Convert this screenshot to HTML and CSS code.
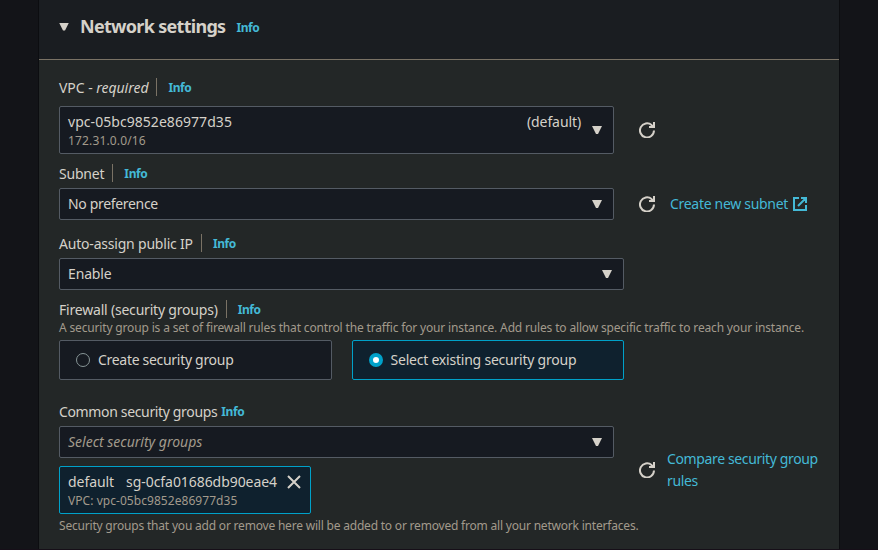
FILE: index.html
```html
<!DOCTYPE html>
<html lang="en">
<head>
<meta charset="utf-8">
<title>Network settings</title>
<link rel="stylesheet" href="styles.css">
</head>
<body>
<svg class="defs" width="0" height="0" aria-hidden="true">
  <symbol id="refresh" viewBox="0 0 16 16"><path d="M15 8.5A7 7 0 1 1 12.6 3.1L14 4.6" fill="none" stroke="currentColor" stroke-width="2"/><path d="M14 0h2v6h-6V4h2.5L14 3z" fill="currentColor"/></symbol>
  <symbol id="external" viewBox="0 0 14 14"><path d="M6 1H1v12h12V8M8 1h5v5M13 1 5 9" fill="none" stroke="currentColor" stroke-width="2"/></symbol>
  <symbol id="close" viewBox="0 0 14 14"><path d="m1 1 12 12M13 1 1 13" fill="none" stroke="currentColor" stroke-width="2"/></symbol>
</svg>
<main class="panel">
  <header class="panel-header">
    <span class="caret"></span>
    <h2>Network settings</h2>
    <a class="info">Info</a>
  </header>
  <div class="panel-body">
    <section class="field vpc">
      <div class="label"><span class="name">VPC - <i>required</i></span><span class="divider"></span><a class="info">Info</a></div>
      <div class="row">
        <div class="select tall">
          <div class="option"><span class="vpc-id">vpc-05bc9852e86977d35</span><small>172.31.0.0/16</small></div>
          <span class="tag">(default)</span>
          <span class="caret"></span>
        </div>
        <svg class="refresh"><use href="#refresh"/></svg>
      </div>
    </section>
    <section class="field subnet">
      <div class="label"><span class="name">Subnet</span><span class="divider"></span><a class="info">Info</a></div>
      <div class="row">
        <div class="select"><span class="value">No preference</span><span class="caret"></span></div>
        <svg class="refresh"><use href="#refresh"/></svg>
        <a class="link">Create new subnet</a>
        <svg class="external"><use href="#external"/></svg>
      </div>
    </section>
    <section class="field public-ip">
      <div class="label"><span class="name">Auto-assign public IP</span><span class="divider"></span><a class="info">Info</a></div>
      <div class="select wide"><span class="value">Enable</span><span class="caret"></span></div>
    </section>
    <section class="field firewall">
      <div class="label"><span class="name">Firewall (security groups)</span><span class="divider"></span><a class="info">Info</a></div>
      <p class="hint about">A security group is a set of firewall rules that control the traffic for your instance. Add rules to allow specific traffic to reach your instance.</p>
      <div class="tiles">
        <div class="tile"><span class="radio"></span><span>Create security group</span></div>
        <div class="tile selected"><span class="radio"></span><span>Select existing security group</span></div>
      </div>
    </section>
    <section class="field groups">
      <div class="label"><span class="name">Common security groups</span><a class="info">Info</a></div>
      <div class="row">
        <div class="group-column">
          <div class="select"><i class="placeholder">Select security groups</i><span class="caret"></span></div>
          <div class="token">
            <div class="token-title"><span>default</span><span class="group-id">sg-0cfa01686db90eae4</span><svg class="close"><use href="#close"/></svg></div>
            <small>VPC: vpc-05bc9852e86977d35</small>
          </div>
        </div>
        <svg class="refresh"><use href="#refresh"/></svg>
        <a class="link compare">Compare security group rules</a>
      </div>
      <p class="hint note">Security groups that you add or remove here will be added to or removed from all your network interfaces.</p>
    </section>
  </div>
</main>
</body>
</html>
```

FILE: styles.css
```css
* { box-sizing: border-box; }
body {
  margin: 0;
  height: 550px;
  overflow: hidden;
  border-bottom: 1px solid #160f18;
  background: #131418;
  color: #d5d1c9;
  font: 14px/18px "Noto Sans", "Open Sans", sans-serif;
}
.defs { display: block; height: 0; }
.panel {
  width: 802px;
  height: 549px;
  margin-left: 38px;
  border: solid #0c0d10;
  border-width: 0 1px;
  background: #232727;
}
.panel-header {
  display: flex;
  align-items: center;
  height: 60px;
  padding: 0 20px 6px;
  border-bottom: 1px solid #7a7265;
  background: #1a1d21;
}
h2 { margin: -1px 11px 0 11px; font-size: 18px; line-height: 24px; letter-spacing: -0.7px; }
.info { color: #44b9d6; font-size: 12px; font-weight: 700; letter-spacing: -0.4px; }
.panel-header .info { padding-top: 2px; }
.caret {
  flex: none;
  width: 10px;
  height: 8px;
  background: #d5d1c9;
  clip-path: polygon(0 0, 100% 0, 60% 100%, 40% 100%);
}
.panel-body { padding: 18px 20px 0; }
.label { display: flex; align-items: center; height: 18px; white-space: nowrap; }
.label .name { padding-top: 1px; }
.label .info { padding-top: 2px; }
.name { letter-spacing: -0.2px; }
.vpc .name { letter-spacing: -0.04px; }
.groups .name { letter-spacing: -0.35px; }
.divider { width: 1px; height: 18px; margin: 0 11px 0 8px; background: #7a7265; }
.row { display: flex; align-items: center; }
.select {
  display: flex;
  align-items: center;
  justify-content: space-between;
  width: 555px;
  height: 32px;
  padding: 0 11px 0 8px;
  border: 1px solid #545b64;
  border-radius: 2px;
  background: #161a21;
}
.value { letter-spacing: -0.33px; }
.public-ip .value { letter-spacing: -0.15px; }
.wide { width: 565px; }
.tall { height: 48px; }
.vpc .row { margin-top: 10px; }
.subnet { margin-top: 10px; }
.subnet .row, .public-ip .select { margin-top: 6px; }
.public-ip { margin-top: 14px; }
.firewall { margin-top: 10px; }
.groups { margin-top: 22px; }
.groups .row { margin-top: 6px; }
.option { flex: 1; display: flex; flex-direction: column; padding-top: 2px; }
.option small { padding-top: 1px; letter-spacing: 0.15px; }
.vpc-id { letter-spacing: 0.05px; }
small, .hint { color: #a29a8c; font-size: 12px; }
.tag { align-self: flex-start; margin: 6px 11px 0 0; letter-spacing: -0.1px; }
.refresh { flex: none; width: 16px; height: 16px; margin-left: 25px; }
.link { margin-left: 15px; color: #44b9d6; white-space: nowrap; letter-spacing: -0.3px; }
.external { width: 14px; height: 14px; margin-left: 5px; color: #44b9d6; }
.hint { margin: 0; height: 18px; white-space: nowrap; }
.about { padding-top: 1px; letter-spacing: -0.16px; }
.tiles { display: flex; gap: 20px; margin-top: 4px; }
.tile {
  display: flex;
  align-items: center;
  gap: 8px;
  width: 273px;
  height: 40px;
  padding-left: 16px;
  border: 1px solid #545b64;
  border-radius: 2px;
  background: #161a21;
  letter-spacing: -0.3px;
  white-space: nowrap;
}
.tile.selected { gap: 7.5px; width: 272px; border-color: #00a1c9; background: #0f212e; letter-spacing: -0.22px; }
.radio { width: 14px; height: 14px; border: 1px solid #879596; border-radius: 50%; }
.selected .radio { border: 4px solid #00a1c9; background: #fff; }
.groups .info { margin-left: 4px; }
.placeholder { color: #a29a8c; }
.token {
  display: flex;
  flex-direction: column;
  width: 252px;
  height: 48px;
  margin-top: 8px;
  padding: 6px 9px 6px 8px;
  border: 1px solid #00a1c9;
  border-radius: 2px;
  background: #0f212e;
  white-space: nowrap;
}
.token small { padding-top: 1px; letter-spacing: 0.05px; }
.token-title { display: flex; align-items: center; letter-spacing: -0.06px; }
.group-id { margin-left: 12px; }
.close { width: 14px; height: 14px; margin-left: auto; }
.link.compare { flex: none; width: 158px; margin-left: 12px; line-height: 22px; white-space: normal; letter-spacing: -0.37px; }
.note { margin-top: 3px; letter-spacing: -0.2px; }
```
